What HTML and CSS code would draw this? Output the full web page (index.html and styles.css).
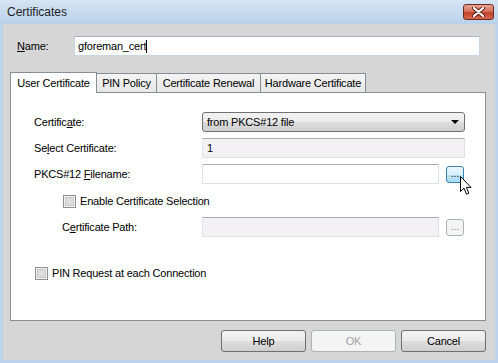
FILE: index.html
```html
<!DOCTYPE html>
<html lang="en">
<head>
    <meta charset="UTF-8">
    <title>Certificates</title>
    <link rel="stylesheet" href="styles.css">
</head>
<body>
    <div class="window">
        <div class="titlebar">
            <span class="title">Certificates</span>
            <div class="close">
                <svg width="13" height="10" viewBox="0 0 13 10">
                    <path d="M2 1 L11 9 M11 1 L2 9" stroke="#5a1e14" stroke-width="4" stroke-linecap="round"/>
                    <path d="M2 1 L11 9 M11 1 L2 9" stroke="#ffffff" stroke-width="2.2" stroke-linecap="round"/>
                </svg>
            </div>
        </div>

        <div class="client">
            <div class="name-row">
                <span class="name-label"><u>N</u>ame:</span>
                <div class="name-input">gforeman_cert<span class="caret"></span></div>
            </div>

            <div class="tabs">
                <div class="tab active tab-user">User Certificate</div>
                <div class="tab tab-pin">PIN Policy</div>
                <div class="tab tab-renew">Certificate Renewal</div>
                <div class="tab tab-hw">Hardware Certificate</div>
            </div>

            <div class="panel">
                <div class="row">
                    <span class="row-label">Certific<u>a</u>te:</span>
                    <div class="select">
                        <span>from PKCS#12 file</span>
                        <span class="arrow"></span>
                    </div>
                </div>
                <div class="row">
                    <span class="row-label">Se<u>l</u>ect Certificate:</span>
                    <div class="field wide disabled">1</div>
                </div>
                <div class="row">
                    <span class="row-label">PKCS#12 <u>F</u>ilename:</span>
                    <div class="field"></div>
                    <div class="browse hot">...</div>
                </div>
                <div class="row indent check-row">
                    <span class="checkbox"></span>
                    <span>Enable Certificate Selection</span>
                </div>
                <div class="row indent">
                    <span class="row-label short">C<u>e</u>rtificate Path:</span>
                    <div class="field disabled"></div>
                    <div class="browse off">...</div>
                </div>
                <div class="row pin-row">
                    <span class="checkbox"></span>
                    <span>PIN Request at each Connection</span>
                </div>
            </div>

            <div class="buttons">
                <div class="btn">Help</div>
                <div class="btn off">OK</div>
                <div class="btn">Cancel</div>
            </div>
        </div>

        <!-- mouse pointer over the browse button -->
        <svg class="pointer" width="13" height="20" viewBox="0 0 13 20">
            <path d="M0.5 0.5 L0.5 15.5 L4 12.2 L6.5 18.2 L8.8 17.2 L6.4 11.4 L11 11.4 Z" fill="#fff" stroke="#000" stroke-width="1"/>
        </svg>
    </div>
</body>
</html>
```

FILE: styles.css
```css
body {
    margin: 0;
    font-family: "Liberation Sans", Arial, sans-serif;
    font-size: 11px;
    letter-spacing: -0.2px;
    color: #000;
}
.window {
    width: 498px;
    height: 363px;
    display: flex;
    flex-direction: column;
    background: #bcd3ec;
    position: relative;
}
.titlebar {
    height: 24px;
    flex: 0 0 24px;
    display: flex;
    align-items: center;
    justify-content: space-between;
    padding: 0 4px 0 7px;
    background: linear-gradient(#d6e4f4, #bad1eb);
}
.title {
    font-size: 12px;
    letter-spacing: 0;
    color: #1e1e1e;
}
.close {
    width: 31px;
    height: 16px;
    box-sizing: border-box;
    border: 1px solid #6b2b22;
    border-radius: 3px;
    background: linear-gradient(#e8a593, #d6735e 45%, #c2412a 55%, #d46a4f);
    display: flex;
    align-items: center;
    justify-content: center;
}
.client {
    flex: 1;
    margin: 0 3px 3px;
    background: #d6d6d6;
    display: flex;
    flex-direction: column;
}
.name-row {
    display: flex;
    align-items: center;
    height: 20px;
    margin-top: 12px;
    padding-left: 14px;
}
.name-label {
    width: 57px;
}
.name-input {
    width: 406px;
    height: 20px;
    box-sizing: border-box;
    border: 1px solid #c9d6e2;
    border-top-color: #a7b4c2;
    background: #fff;
    padding-left: 3px;
    display: flex;
    align-items: center;
}
.caret {
    display: inline-block;
    width: 1px;
    height: 13px;
    background: #000;
}
.tabs {
    display: flex;
    height: 20px;
    margin: 16px 0 0 7px;
    position: relative;
    z-index: 1;
}
.tab {
    box-sizing: border-box;
    height: 19px;
    align-self: flex-end;
    margin-left: -1px;
    border: 1px solid #898c95;
    border-bottom: none;
    background: linear-gradient(#f4f4f4, #e6e6e6);
    display: flex;
    align-items: center;
    justify-content: center;
}
.tab.active {
    height: 21px;
    margin: 0 0 -1px 0;
    background: #fff;
    align-self: flex-start;
}
.tab-user { width: 87px; }
.tab-pin { width: 61px; }
.tab-renew { width: 105px; }
.tab-hw { width: 106px; }
.panel {
    height: 229px;
    box-sizing: border-box;
    margin: 0 9px 0 7px;
    border: 1px solid #898c95;
    background: #fff;
    padding: 19px 0 0 23px;
}
.row {
    display: flex;
    align-items: center;
    height: 20px;
    margin-top: 6px;
}
.row:first-child {
    margin-top: 0;
}
.row-label {
    width: 168px;
}
.row-label.short {
    width: 140px;
}
.indent {
    padding-left: 28px;
}
.check-row {
    margin-top: 7px;
}
.pin-row {
    margin-top: 26px;
}
.select {
    width: 263px;
    height: 20px;
    box-sizing: border-box;
    border: 1px solid #707070;
    border-radius: 3px;
    background: linear-gradient(#f2f2f2, #ebebeb 50%, #dddddd 51%, #cfcfcf);
    display: flex;
    align-items: center;
    justify-content: space-between;
    padding: 0 5px 0 4px;
}
.arrow {
    width: 0;
    height: 0;
    border-left: 4px solid transparent;
    border-right: 4px solid transparent;
    border-top: 4px solid #000;
}
.field {
    width: 237px;
    height: 20px;
    box-sizing: border-box;
    border: 1px solid #dde1e6;
    border-top-color: #abadb3;
    border-left-color: #e2e3ea;
    background: #fff;
    padding-left: 4px;
    display: flex;
    align-items: center;
}
.field.wide {
    width: 263px;
}
.field.disabled {
    background: #f4f1f4;
}
.browse {
    width: 18px;
    height: 17px;
    box-sizing: border-box;
    margin-left: 7px;
    border-radius: 3px;
    font-size: 10px;
    letter-spacing: 0;
    display: flex;
    align-items: center;
    justify-content: center;
    padding-bottom: 2px;
}
.browse.hot {
    border: 1px solid #3c7fb1;
    background: linear-gradient(#eaf6fd, #d9f0fc 50%, #bee6fd 51%, #a7d9f5);
}
.browse.off {
    border: 1px solid #adb2b5;
    background: #f4f4f4;
    color: #838383;
}
.checkbox {
    width: 13px;
    height: 13px;
    box-sizing: border-box;
    border: 1px solid #8e8f8f;
    background: #f4f4f4;
    box-shadow: inset 0 0 0 1px #f4f4f4, inset 0 0 0 2px #c8c8c8, inset 0 0 0 5px #dcdcdc;
    margin: 0 4px 0 1px;
}
.buttons {
    display: flex;
    justify-content: flex-end;
    gap: 5px;
    margin-top: 9px;
    padding-right: 9px;
}
.btn {
    width: 85px;
    height: 22px;
    box-sizing: border-box;
    border: 1px solid #707070;
    border-radius: 3px;
    background: linear-gradient(#f2f2f2, #ebebeb 50%, #dddddd 51%, #cfcfcf);
    display: flex;
    align-items: center;
    justify-content: center;
}
.btn.off {
    border-color: #adb2b5;
    background: #f4f4f4;
    color: #a0a0a0;
}
.pointer {
    position: absolute;
    left: 460px;
    top: 176px;
}
```
